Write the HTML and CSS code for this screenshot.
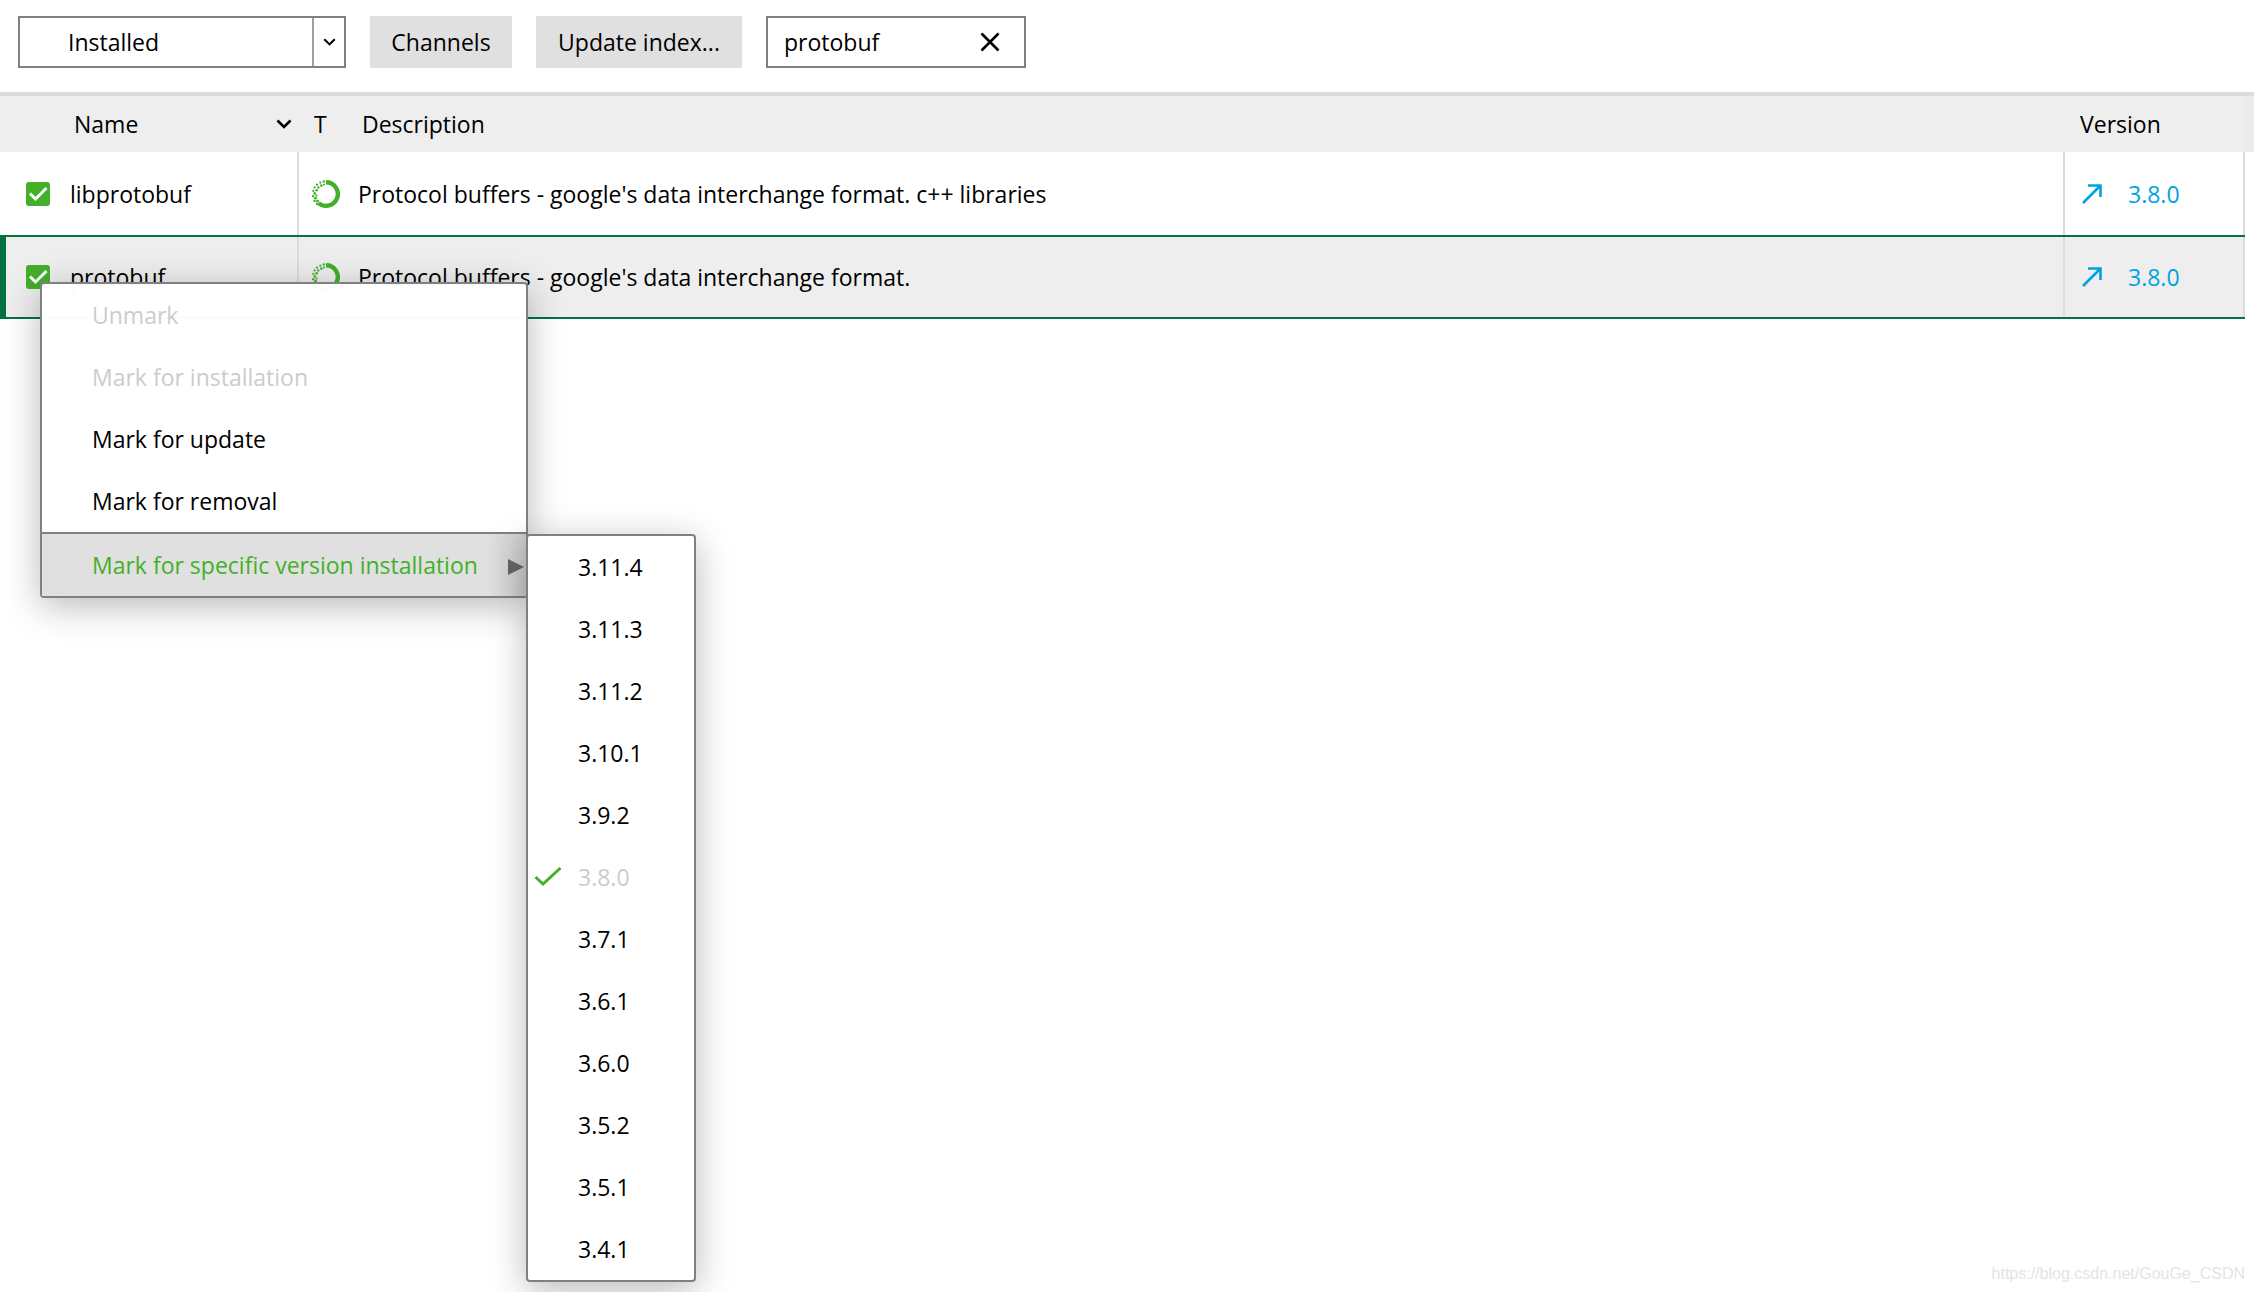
FILE: index.html
```html
<!DOCTYPE html>
<html lang="en">
<head>
<meta charset="utf-8">
<title>Installed packages</title>
<link rel="stylesheet" href="styles.css">
</head>
<body>
<svg class="defs" aria-hidden="true">
  <symbol id="chevron" viewBox="0 0 16 10"><path d="M1.500 1.500 8 8l6.500-6.500" fill="none" stroke="currentColor" stroke-width="2.600"/></symbol>
  <symbol id="tick" viewBox="0 0 24 24"><path d="M4 11.500 9.500 17 20.500 6" fill="none" stroke="#fff" stroke-width="3"/></symbol>
  <symbol id="arrow" viewBox="0 0 20 20"><path d="M1 19 18 2M6 1.500h12.500V13" fill="none" stroke="currentColor" stroke-width="2.600"/></symbol>
  <symbol id="ring" viewBox="0 0 28 28">
    <path d="M14 2.200A11.800 11.800 0 1 1 6.500 23.100" fill="none" stroke="currentColor" stroke-width="4.400"/>
    <g fill="currentColor">
      <circle cx="11.800" cy="1.500" r="1.200"/><circle cx="12" cy="4.600" r="1"/><circle cx="8.300" cy="2.700" r="1.100"/><circle cx="9.300" cy="5.600" r="1.300"/>
      <circle cx="5" cy="4.600" r="1.200"/><circle cx="6.300" cy="7.400" r="1.200"/><circle cx="2.600" cy="7.400" r="1.100"/><circle cx="4.600" cy="10.200" r="1.300"/>
      <circle cx="1.300" cy="10.900" r="1.100"/><circle cx="2.800" cy="13.400" r="1.300"/><circle cx="4.600" cy="15.500" r="1.100"/>
      <circle cx="1.200" cy="16.200" r="1.200"/><circle cx="3.600" cy="18.200" r="1.400"/><circle cx="2.600" cy="21" r="1.200"/><circle cx="5.600" cy="21.200" r="1.400"/><circle cx="5" cy="24" r="1.200"/>
    </g>
  </symbol>
</svg>

<header class="toolbar">
  <div class="picker">
    <select aria-label="Package filter"><option>Installed</option><option>Not installed</option><option>All</option></select>
    <span class="picker-arrow"><svg width="13" height="8"><use href="#chevron"/></svg></span>
  </div>
  <button class="btn channels" type="button">Channels</button>
  <button class="btn update" type="button">Update index...</button>
  <div class="search">
    <input type="text" value="protobuf" aria-label="Search packages">
    <button type="button" aria-label="Clear search"><svg width="20" height="20" viewBox="0 0 20 20"><path d="M1.500 1.500l17 17M18.500 1.500l-17 17" stroke="#000" stroke-width="2.600"/></svg></button>
  </div>
</header>

<main class="packages">
  <table>
    <colgroup><col class="col-name"><col class="col-type"><col><col class="col-version"></colgroup>
    <thead>
      <tr>
        <th scope="col"><div class="sort">Name <svg width="16" height="10"><use href="#chevron"/></svg></div></th>
        <th scope="col" class="type">T</th>
        <th scope="col" class="desc">Description</th>
        <th scope="col" class="ver">Version</th>
      </tr>
    </thead>
    <tbody>
      <tr>
        <td class="edge"><label class="pkg"><span class="check"><input type="checkbox" checked><svg><use href="#tick"/></svg></span>libprotobuf</label></td>
        <td class="type"><svg class="ring"><use href="#ring"/></svg></td>
        <td class="edge">Protocol buffers - google's data interchange format. c++ libraries</td>
        <td class="edge"><a class="version" href="#update"><svg width="20" height="20"><use href="#arrow"/></svg>3.8.0</a></td>
      </tr>
      <tr class="selected">
        <td class="edge first"><label class="pkg"><span class="check"><input type="checkbox" checked><svg><use href="#tick"/></svg></span>protobuf</label></td>
        <td class="type"><svg class="ring"><use href="#ring"/></svg></td>
        <td class="edge">Protocol buffers - google's data interchange format.</td>
        <td class="edge"><a class="version" href="#update"><svg width="20" height="20"><use href="#arrow"/></svg>3.8.0</a></td>
      </tr>
    </tbody>
  </table>
</main>

<ul class="menu actions">
  <li><button type="button" disabled>Unmark</button></li>
  <li><button type="button" disabled>Mark for installation</button></li>
  <li><button type="button">Mark for update</button></li>
  <li><button type="button">Mark for removal</button></li>
  <li class="open"><button type="button">Mark for specific version installation <svg width="16" height="20" viewBox="0 0 16 20"><path d="M0 4l16 8-16 8z" fill="#666"/></svg></button></li>
</ul>

<ul class="menu versions">
  <li><button type="button">3.11.4</button></li>
  <li><button type="button">3.11.3</button></li>
  <li><button type="button">3.11.2</button></li>
  <li><button type="button">3.10.1</button></li>
  <li><button type="button">3.9.2</button></li>
  <li class="current"><button type="button" disabled><svg width="28" height="20" viewBox="0 0 28 20"><path d="M1.500 10 9 17 26.500 1" fill="none" stroke="#43b02a" stroke-width="3"/></svg>3.8.0</button></li>
  <li><button type="button">3.7.1</button></li>
  <li><button type="button">3.6.1</button></li>
  <li><button type="button">3.6.0</button></li>
  <li><button type="button">3.5.2</button></li>
  <li><button type="button">3.5.1</button></li>
  <li><button type="button">3.4.1</button></li>
</ul>

<p class="credit">https://blog.csdn.net/GouGe_CSDN</p>
</body>
</html>
```
FILE: styles.css
```css
* { box-sizing: border-box; }

body {
  margin: 0;
  min-height: 100vh;
  position: relative;
  background: #fff;
  color: #000;
  font: 23px/32px "Open Sans", "Noto Sans", sans-serif;
}

button, input, select {
  font: inherit;
  color: inherit;
  margin: 0;
  padding: 0;
  border: 0;
  border-radius: 0;
  background: none;
}

svg { display: block; flex: none; }
.defs { position: absolute; width: 0; height: 0; }

/* Toolbar */
.toolbar {
  display: flex;
  gap: 24px;
  padding: 16px 18px 24px;
  border-bottom: 4px solid #dcdcdc;
}

.picker {
  display: grid;
  grid-template-columns: 1fr 32px;
  width: 328px;
  height: 52px;
  border: 2px solid #808080;
}

.picker select {
  grid-area: 1 / 1 / 2 / 3;
  appearance: none;
  padding-left: 48px;
}

.picker-arrow {
  grid-area: 1 / 2;
  display: grid;
  place-items: center;
  border-left: 2px solid #a0a0a0;
  pointer-events: none;
}

.btn { height: 52px; background: #e0e0e0; }
.channels { width: 142px; }
.update { width: 206px; }

.search {
  display: flex;
  align-items: center;
  width: 260px;
  height: 52px;
  padding: 0 24px 0 16px;
  border: 2px solid #808080;
}

.search input { flex: 1; min-width: 0; outline: 0; }

/* Package table */
.packages {
  padding-right: 9px;
  background: linear-gradient(#ebebeb, #ebebeb) top / 100% 56px no-repeat;
}

table {
  width: 100%;
  table-layout: fixed;
  border-collapse: separate;
  border-spacing: 0;
}

.col-name { width: 299px; }
.col-type { width: 59px; }
.col-version { width: 180px; }

th {
  height: 56px;
  padding: 0;
  background: #eee;
  font-weight: 400;
  text-align: left;
}

th.type { padding-left: 15px; }
th.desc { padding-left: 4px; }
th.ver { padding-left: 15px; }

.sort {
  display: flex;
  align-items: center;
  justify-content: space-between;
  padding: 0 7px 0 74px;
}

td { height: 83px; padding: 0; }
.selected td { height: 84px; }
td.type { padding-left: 13px; }
.edge { box-shadow: inset -2px 0 #dcdcdc; }

.selected td {
  background: #eee;
  box-shadow: inset 0 2px #007340, inset 0 -2px #007340;
}
.selected .edge {
  box-shadow: inset 0 2px #007340, inset 0 -2px #007340, inset -2px 0 #dcdcdc;
}
.selected .first {
  box-shadow: inset 6px 0 #007340, inset 0 2px #007340, inset 0 -2px #007340, inset -2px 0 #dcdcdc;
}

.pkg {
  display: flex;
  align-items: center;
  gap: 20px;
  padding-left: 26px;
}

.check { display: grid; width: 24px; height: 24px; }
.check > * { grid-area: 1 / 1; width: 24px; height: 24px; }
.check svg { pointer-events: none; }
.check input { appearance: none; border-radius: 3px; background: #43b02a; }

.ring { width: 28px; height: 28px; color: #43b02a; }

.version {
  display: flex;
  align-items: center;
  gap: 26px;
  padding-left: 17px;
  color: #00a3e0;
  text-decoration: none;
}

/* Context menus */
.menu {
  position: absolute;
  margin: 0;
  padding: 0;
  list-style: none;
  border: 2px solid #808080;
  border-radius: 4px;
  background: rgba(255, 255, 255, 0.98);
  box-shadow: 0 8px 36px rgba(0, 0, 0, 0.28);
}

.menu button {
  display: flex;
  align-items: center;
  width: 100%;
  height: 62px;
  text-align: left;
}

.menu button:disabled { color: #ccc; }

.actions { top: 282px; left: 40px; width: 488px; }
.actions button { padding-left: 50px; }

.open {
  border-top: 2px solid #808080;
  background: linear-gradient(to right, #e0e0e0 92%, #cacaca);
}
.open button { justify-content: space-between; padding-right: 2px; color: #43b02a; }

.versions { top: 534px; left: 526px; width: 170px; background: #fff; }
.versions button { padding-left: 50px; }
.versions .current button { gap: 16px; padding-left: 6px; }

.credit {
  position: absolute;
  right: 9px;
  bottom: 8px;
  margin: 0;
  color: #e4e4e4;
  font: 16px/20px "Liberation Sans", Arial, sans-serif;
}
```
